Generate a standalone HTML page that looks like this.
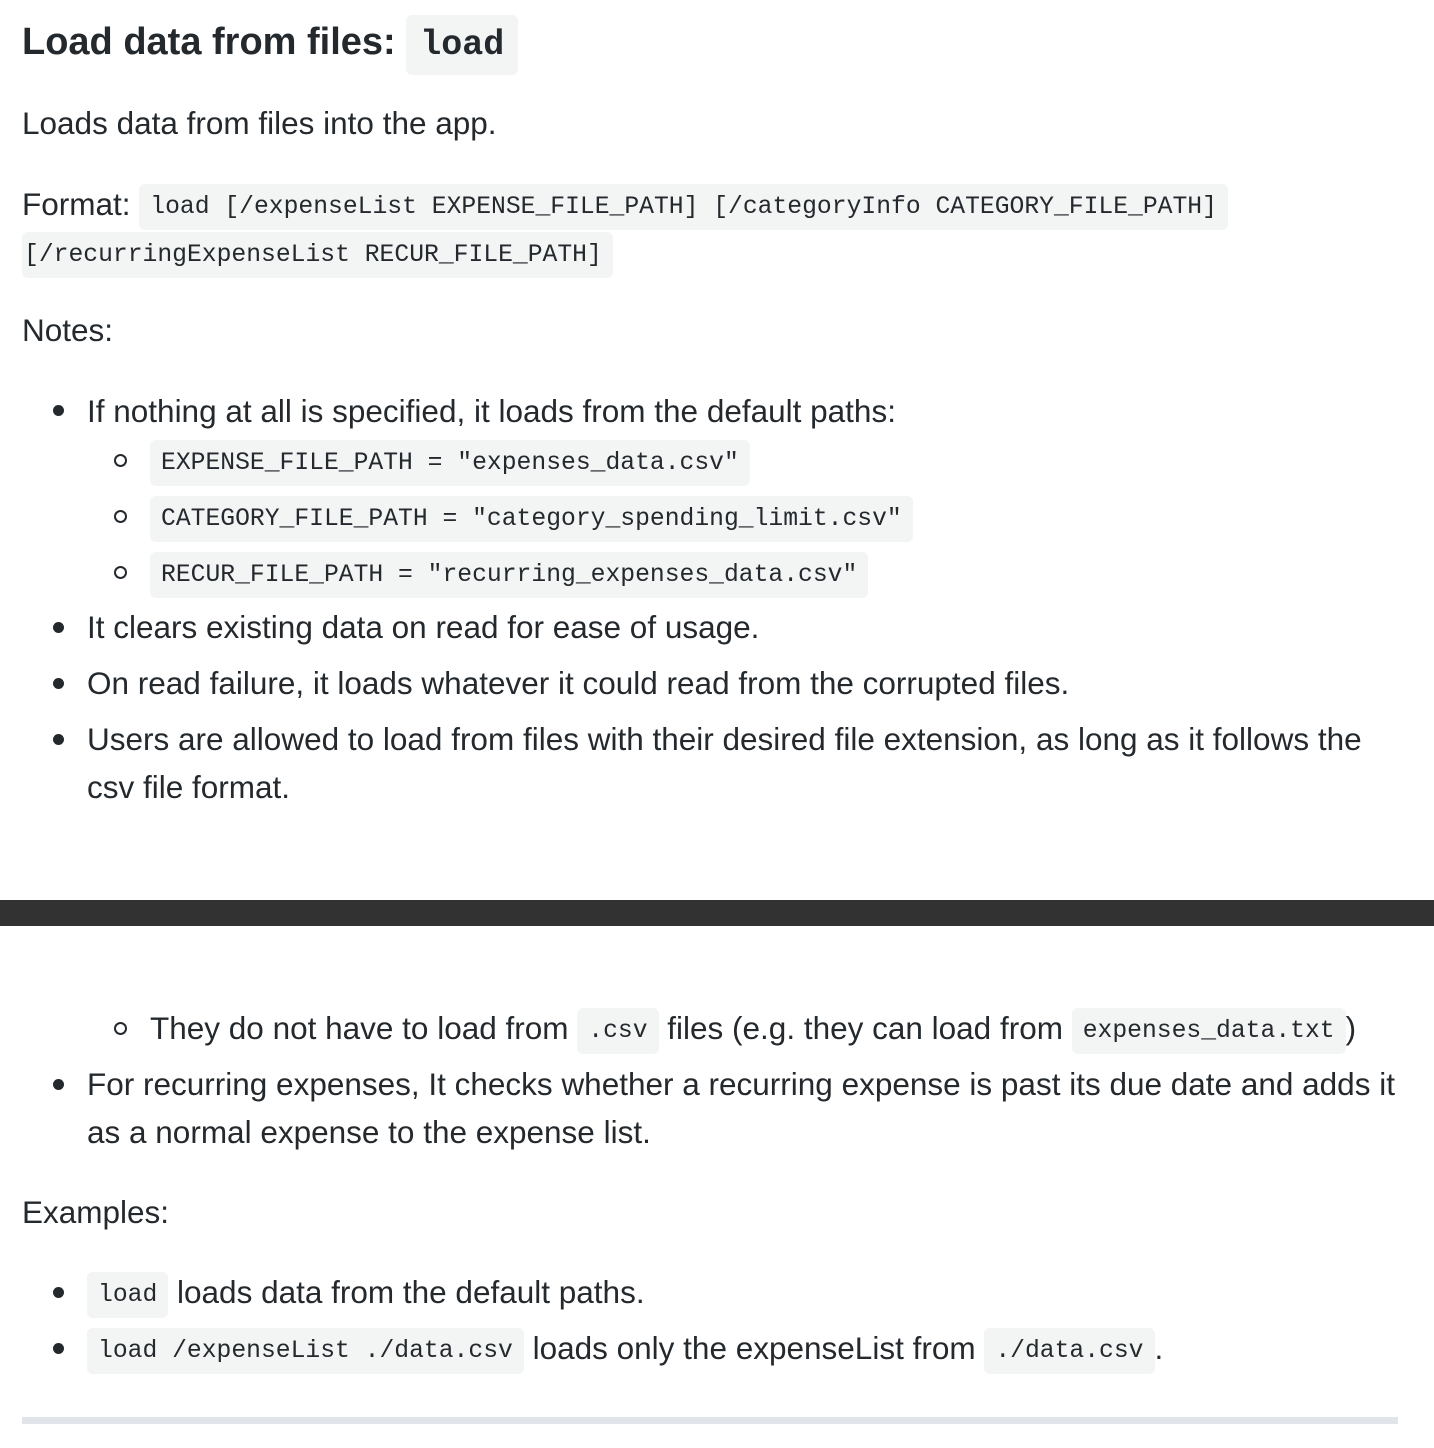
<!DOCTYPE html>
<html><head><meta charset="utf-8"><style>
body{margin:0;width:1434px;height:1448px;background:#fff;position:relative;overflow:hidden;font-family:"Liberation Sans",sans-serif;color:#24292e}
.l{position:absolute;left:22px;height:48px;line-height:48px;font-size:31.5px;white-space:nowrap}
code{font-family:"Liberation Mono",monospace;font-size:24.7px;background:#f3f4f4;border-radius:6px;padding:9px 11px;position:relative;top:-2px}
.b{left:87px}.s{left:150px}
.d{position:absolute;width:11px;height:11px;border-radius:50%;background:#24292e}
.c{position:absolute;width:9px;height:9px;border-radius:50%;border:2px solid #24292e}
</style></head><body>
<div class="l" style="top:14px;font-size:38px;font-weight:bold;height:56px;line-height:56px">Load data from files: <code style="font-size:35px;font-weight:bold;padding:10px 14px;top:0">load</code></div>
<div class="l" style="top:99px">Loads data from files into the app.</div>
<div class="l" style="top:180px">Format: <code>load [/expenseList EXPENSE_FILE_PATH] [/categoryInfo CATEGORY_FILE_PATH]</code></div>
<div class="l" style="top:228px;left:22px"><code style="padding-left:2px">[/recurringExpenseList RECUR_FILE_PATH]</code></div>
<div class="l" style="top:306px">Notes:</div>

<div class="d" style="left:53px;top:405px"></div>
<div class="l b" style="top:387px">If nothing at all is specified, it loads from the default paths:</div>
<div class="c" style="left:114px;top:454px"></div>
<div class="l s" style="top:436px"><code>EXPENSE_FILE_PATH = "expenses_data.csv"</code></div>
<div class="c" style="left:114px;top:510px"></div>
<div class="l s" style="top:492px"><code>CATEGORY_FILE_PATH = "category_spending_limit.csv"</code></div>
<div class="c" style="left:114px;top:566px"></div>
<div class="l s" style="top:548px"><code>RECUR_FILE_PATH = "recurring_expenses_data.csv"</code></div>
<div class="d" style="left:53px;top:622px"></div>
<div class="l b" style="top:603px">It clears existing data on read for ease of usage.</div>
<div class="d" style="left:53px;top:678px"></div>
<div class="l b" style="top:659px">On read failure, it loads whatever it could read from the corrupted files.</div>
<div class="d" style="left:53px;top:734px"></div>
<div class="l b" style="top:715px">Users are allowed to load from files with their desired file extension, as long as it follows the</div>
<div class="l b" style="top:763px">csv file format.</div>

<div style="position:absolute;left:0;top:900px;width:1434px;height:26px;background:#323232"></div>

<div class="c" style="left:114px;top:1022px"></div>
<div class="l s" style="top:1004px">They do not have to load from <code>.csv</code> files (e.g. they can load from <code>expenses_data.txt</code>)</div>
<div class="d" style="left:53px;top:1079px"></div>
<div class="l b" style="top:1060px">For recurring expenses, It checks whether a recurring expense is past its due date and adds it</div>
<div class="l b" style="top:1108px">as a normal expense to the expense list.</div>
<div class="l" style="top:1188px">Examples:</div>
<div class="d" style="left:53px;top:1287px"></div>
<div class="l b" style="top:1268px"><code>load</code> loads data from the default paths.</div>
<div class="d" style="left:53px;top:1343px"></div>
<div class="l b" style="top:1324px"><code>load /expenseList ./data.csv</code> loads only the expenseList from <code>./data.csv</code>.</div>
<div style="position:absolute;left:22px;top:1417px;width:1376px;height:7px;background:#e1e4e8"></div>
</body></html>
